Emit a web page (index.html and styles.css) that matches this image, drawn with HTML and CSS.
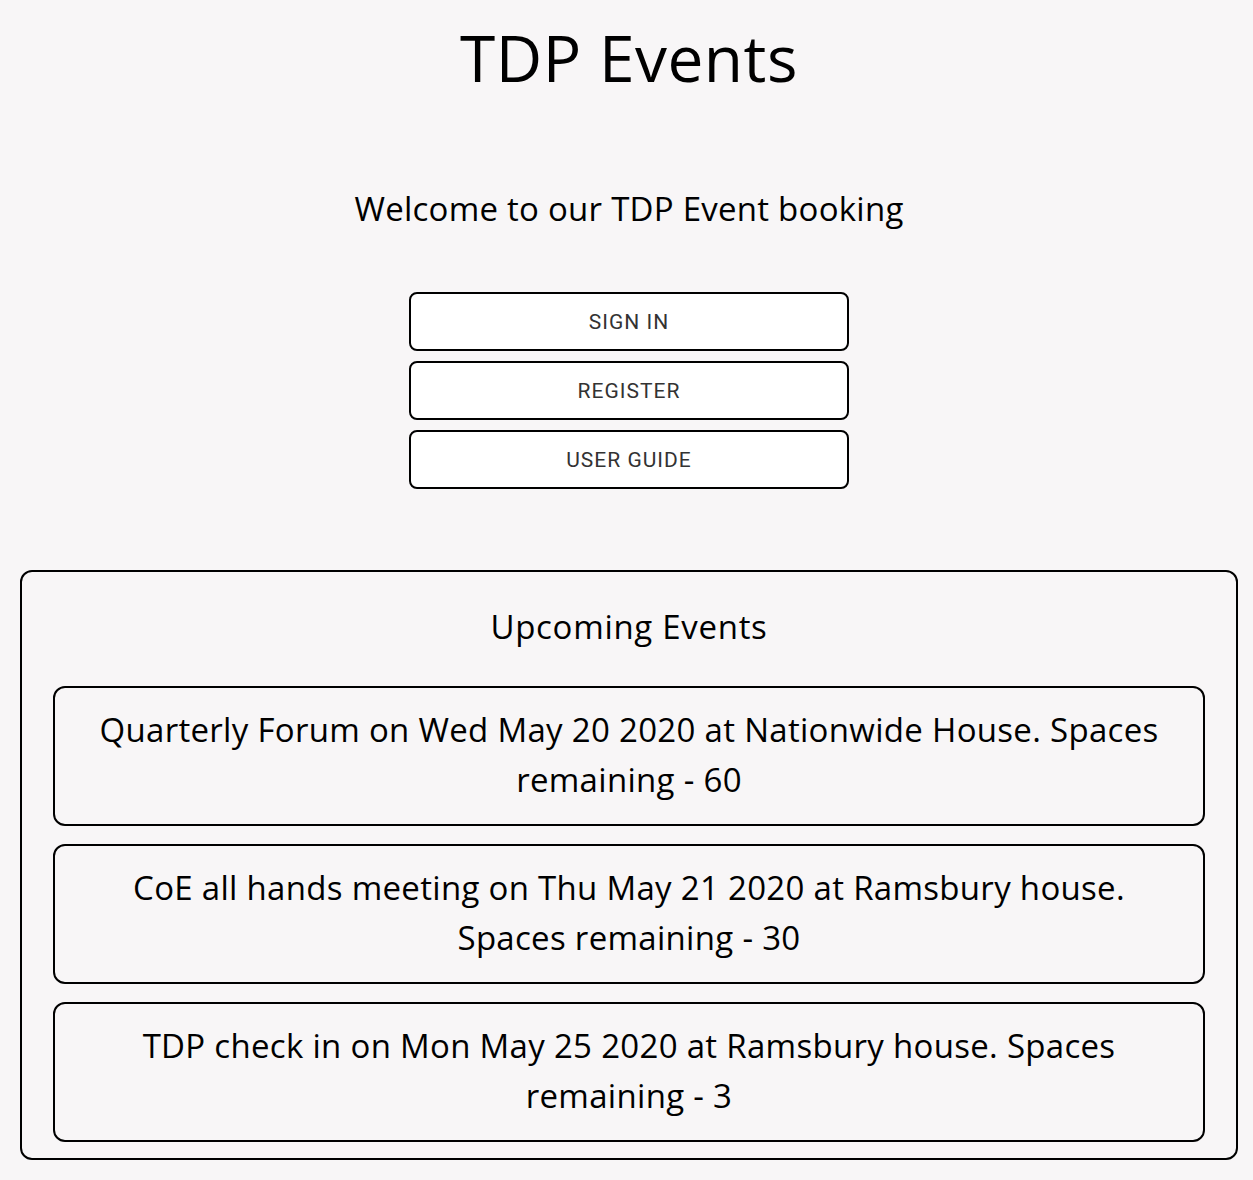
FILE: index.html
```html
<!DOCTYPE html>
<html lang="en">
<head>
<meta charset="utf-8">
<title>TDP Events</title>
<link rel="stylesheet" href="styles.css">
</head>
<body>
<div class="page">
  <h1 class="title">TDP Events</h1>
  <p class="welcome">Welcome to our TDP Event booking</p>
  <div class="actions">
    <button class="btn btn-signin">Sign in</button>
    <button class="btn btn-register">Register</button>
    <button class="btn btn-guide">User guide</button>
  </div>
  <section class="upcoming">
    <h2 class="upcoming-title">Upcoming Events</h2>
    <div class="event">Quarterly Forum on Wed May 20 2020 at Nationwide House. Spaces remaining - 60</div>
    <div class="event">CoE all hands meeting on Thu May 21 2020 at Ramsbury house. Spaces remaining - 30</div>
    <div class="event">TDP check in on Mon May 25 2020 at Ramsbury house. Spaces remaining - 3</div>
  </section>
</div>
</body>
</html>
```

FILE: styles.css
```css
html, body {
  margin: 0;
  padding: 0;
  background: #f8f6f7;
}

body {
  font-family: "Open Sans", "Liberation Sans", sans-serif;
  color: #000;
}

.page {
  padding: 0 15px 0 20px;
  display: flex;
  flex-direction: column;
  align-items: stretch;
}

.title {
  margin: 18px 0 0;
  font-size: 64px;
  line-height: 80px;
  font-weight: 400;
  letter-spacing: 0.5px;
  text-align: center;
}

.welcome {
  margin: 91px 0 0;
  font-size: 33px;
  line-height: 40px;
  letter-spacing: 0.25px;
  text-align: center;
}

.actions {
  margin-top: 63px;
  display: flex;
  flex-direction: column;
  align-items: center;
  gap: 10px;
}

.btn {
  box-sizing: border-box;
  width: 440px;
  height: 59px;
  background: #fff;
  border: 2px solid #000;
  border-radius: 8px;
  font-family: Roboto, "Liberation Sans", sans-serif;
  font-size: 21px;
  letter-spacing: 1px;
  text-transform: uppercase;
  color: #333;
  padding: 0;
  cursor: pointer;
}

.upcoming {
  margin-top: 81px;
  border: 2px solid #000;
  border-radius: 12px;
  padding: 35px 31px 16px;
  display: flex;
  flex-direction: column;
  gap: 18px;
}

.upcoming-title {
  margin: 0 0 21px;
  font-size: 33px;
  line-height: 40px;
  font-weight: 400;
  letter-spacing: 0.7px;
  text-align: center;
}

.event {
  border: 2px solid #000;
  border-radius: 12px;
  padding: 17px 40px 19px;
  font-size: 33px;
  line-height: 50px;
  letter-spacing: 0.3px;
  text-align: center;
}
```
